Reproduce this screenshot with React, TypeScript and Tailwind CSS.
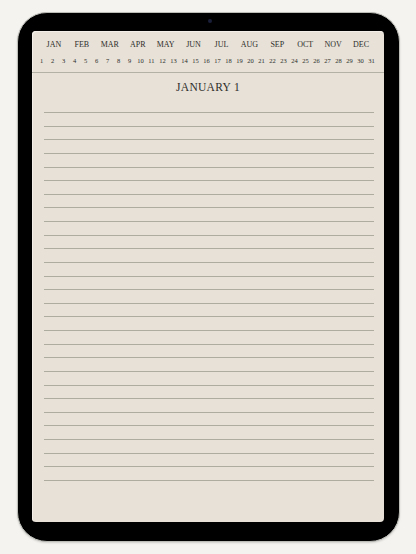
const months = ["JAN", "FEB", "MAR", "APR", "MAY", "JUN", "JUL", "AUG", "SEP", "OCT", "NOV", "DEC"];
const days = Array.from({ length: 31 }, (_, i) => i + 1);
const lines = Array.from({ length: 28 }, (_, i) => i);

export default function App() {
  return (
    <div
      className="w-[416px] h-[554px] bg-[#f4f3ef] pt-[12px] pl-[17px] overflow-hidden"
      style={{ fontFamily: '"Liberation Serif", "DejaVu Serif", serif' }}
    >
      <div className="relative w-[383px] h-[530px] rounded-[30px] bg-black border border-[#bdbdb8] shadow-[0_1px_2px_rgba(0,0,0,0.15)] pt-[18px] pl-[14px]">
        <div className="absolute left-[190px] top-[6px] w-[4px] h-[4px] rounded-full bg-[#1b1f3a]" />
        <div className="w-[352px] h-[491px] rounded-[4px] bg-[#e7e1d8] text-[#2e2d29] overflow-hidden shadow-[inset_1px_1px_0_#f3efe8]">
          <div className="ml-[8px] w-[335px] mt-[8px] h-[12px] grid grid-cols-12 text-center text-[8px] leading-[12px]">
            {months.map((m) => (
              <span key={m}>{m}</span>
            ))}
          </div>
          <div className="ml-[4px] w-[341px] mt-[5px] h-[10px] grid grid-cols-[repeat(31,minmax(0,1fr))] text-center text-[6.5px] leading-[10px]">
            {days.map((d) => (
              <span key={d}>{d}</span>
            ))}
          </div>
          <div className="mt-[6px] h-px bg-[#b3b0a5]" />
          <div className="mt-[6px] h-[16px] text-center text-[11.5px] leading-[16px] tracking-[0.3px]">JANUARY 1</div>
          <div className="mt-[17px] ml-[12px] mr-[10px] flex flex-col">
            {lines.map((l) => (
              <div key={l} className="h-px mb-[12.63px] bg-[#aeac9f]" />
            ))}
          </div>
        </div>
      </div>
    </div>
  );
}
